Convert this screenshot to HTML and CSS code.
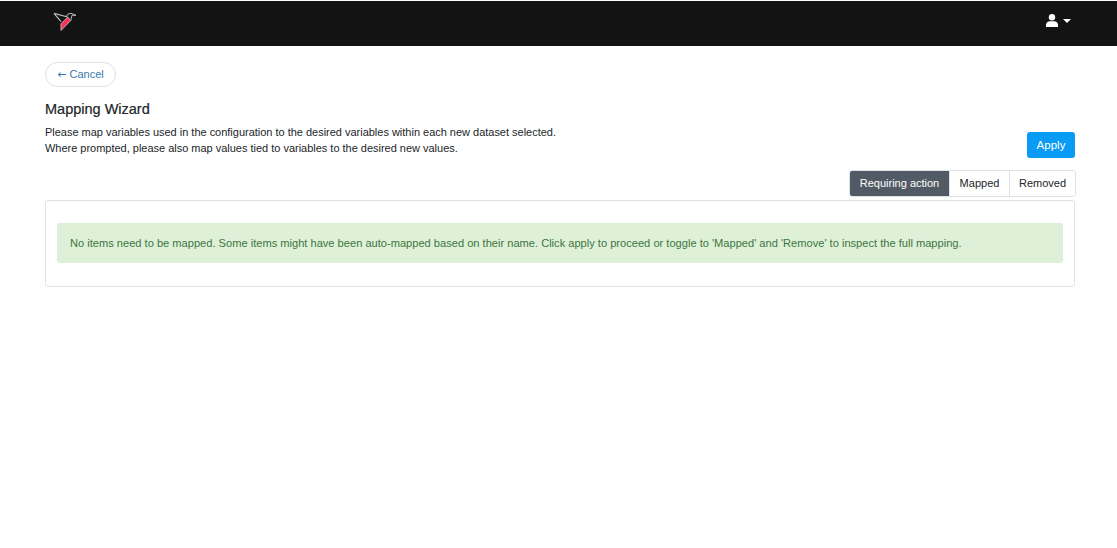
FILE: index.html
```html
<!DOCTYPE html>
<html lang="en">
<head>
<meta charset="utf-8">
<title>Mapping Wizard</title>
<link rel="stylesheet" href="styles.css">
</head>
<body>
<header class="navbar">
  <a class="logo" href="#" aria-label="Home">
    <svg width="24" height="22" viewBox="0 0 24 22">
      <path d="M14.700 7 L8 13.800 L8 20.500 L17.700 10.500 Z" fill="#f8305a" stroke="#ccc" stroke-width="0.800"/>
      <path d="M1 3.300 L14.700 7 M1 3.300 L8 11.700" fill="none" stroke="#bbb" stroke-width="1.200"/>
      <path d="M13.500 6 L15 4 L18 3.300 L23 5.300 L19 5.300 L17.700 10.500" fill="none" stroke="#bbb" stroke-width="1"/>
    </svg>
  </a>
  <button class="user" aria-label="User menu">
    <svg width="12" height="13" viewBox="0 0 12 13">
      <circle cx="6" cy="3.200" r="3.200" fill="#fff"/>
      <path d="M0 13 V11 C0 8.800 1.800 7.300 3.800 7.300 H8.200 C10.200 7.300 12 8.800 12 11 V13 Z" fill="#fff"/>
    </svg>
    <span class="caret"></span>
  </button>
</header>
<main class="page">
  <a class="cancel" href="#"><span class="arrow">←</span> Cancel</a>
  <h1 class="title">Mapping Wizard</h1>
  <div class="intro">
    <p class="intro-text">Please map variables used in the configuration to the desired variables within each new dataset selected.<br>Where prompted, please also map values tied to variables to the desired new values.</p>
    <button class="apply">Apply</button>
  </div>
  <div class="toggle-row">
    <div class="toggle">
      <button class="toggle-btn active">Requiring action</button>
      <button class="toggle-btn">Mapped</button>
      <button class="toggle-btn">Removed</button>
    </div>
  </div>
  <section class="card">
    <div class="alert">No items need to be mapped. Some items might have been auto-mapped based on their name. Click apply to proceed or toggle to 'Mapped' and 'Remove' to inspect the full mapping.</div>
  </section>
</main>
</body>
</html>
```
FILE: styles.css
```css
* { box-sizing: border-box; }
html, body { margin: 0; padding: 0; }
body {
  background: #fff;
  color: #212529;
  font-family: "Liberation Sans", Arial, sans-serif;
  font-size: 11px;
  line-height: 16px;
}
button { font-family: inherit; cursor: pointer; }
.navbar {
  height: 45px;
  margin-top: 1px;
  background: #131313;
  display: flex;
  justify-content: space-between;
  align-items: flex-start;
  padding: 0 46px 0 53px;
}
.logo { display: block; height: 22px; margin-top: 9px; }
.logo svg { display: block; }
.user {
  display: flex;
  align-items: center;
  gap: 5px;
  margin-top: 13px;
  padding: 0;
  background: none;
  border: 0;
}
.user svg { display: block; }
.caret {
  width: 0;
  height: 0;
  border-left: 4px solid transparent;
  border-right: 4px solid transparent;
  border-top: 4px solid #fff;
}
.page { padding: 16px 42px 0 45px; }
.cancel {
  display: block;
  width: 71px;
  height: 25px;
  border: 1px solid #dee2e6;
  border-radius: 13px;
  color: #3b78ac;
  text-decoration: none;
  text-align: center;
  line-height: 23px;
}
.arrow { font-family: "DejaVu Sans", sans-serif; font-size: 11px; }
.title {
  margin: 13px 0 0;
  font-size: 14.500px;
  font-weight: 400;
  line-height: 19px;
  color: #212529;
  -webkit-text-stroke: 0.2px #212529;
}
.intro {
  display: flex;
  justify-content: space-between;
  align-items: flex-end;
  margin-top: 5px;
}
.intro-text { margin: 0; font-size: 10.980px; line-height: 16px; }
.apply {
  width: 48px;
  height: 26px;
  margin-bottom: -2px;
  background: #0a9bf5;
  border: 0;
  border-radius: 3px;
  color: #fff;
  font-size: 11.500px;
  padding: 0;
}
.toggle-row {
  display: flex;
  justify-content: flex-end;
  margin-top: 14px;
  margin-right: -1px;
}
.toggle {
  display: flex;
  height: 27px;
  border: 1px solid #dee2e6;
  border-radius: 3px;
  overflow: hidden;
}
.toggle-btn {
  background: #fff;
  border: 0;
  border-left: 1px solid #dee2e6;
  color: #212529;
  font-size: 11px;
  padding: 0 0 1px;
  width: 60px;
}
.toggle-btn:nth-child(3) { width: 66px; }
.toggle-btn.active {
  width: 99px;
  border-left: 0;
  background: #525b65;
  color: #fff;
}
.card {
  margin-top: 3px;
  height: 87px;
  border: 1px solid #dee2e6;
  border-radius: 3px;
  padding: 22px 11px 0;
}
.alert {
  height: 40px;
  padding: 0 13px;
  background: #dff0d8;
  border-radius: 3px;
  color: #3c763d;
  font-size: 11.100px;
  line-height: 40px;
}
```
